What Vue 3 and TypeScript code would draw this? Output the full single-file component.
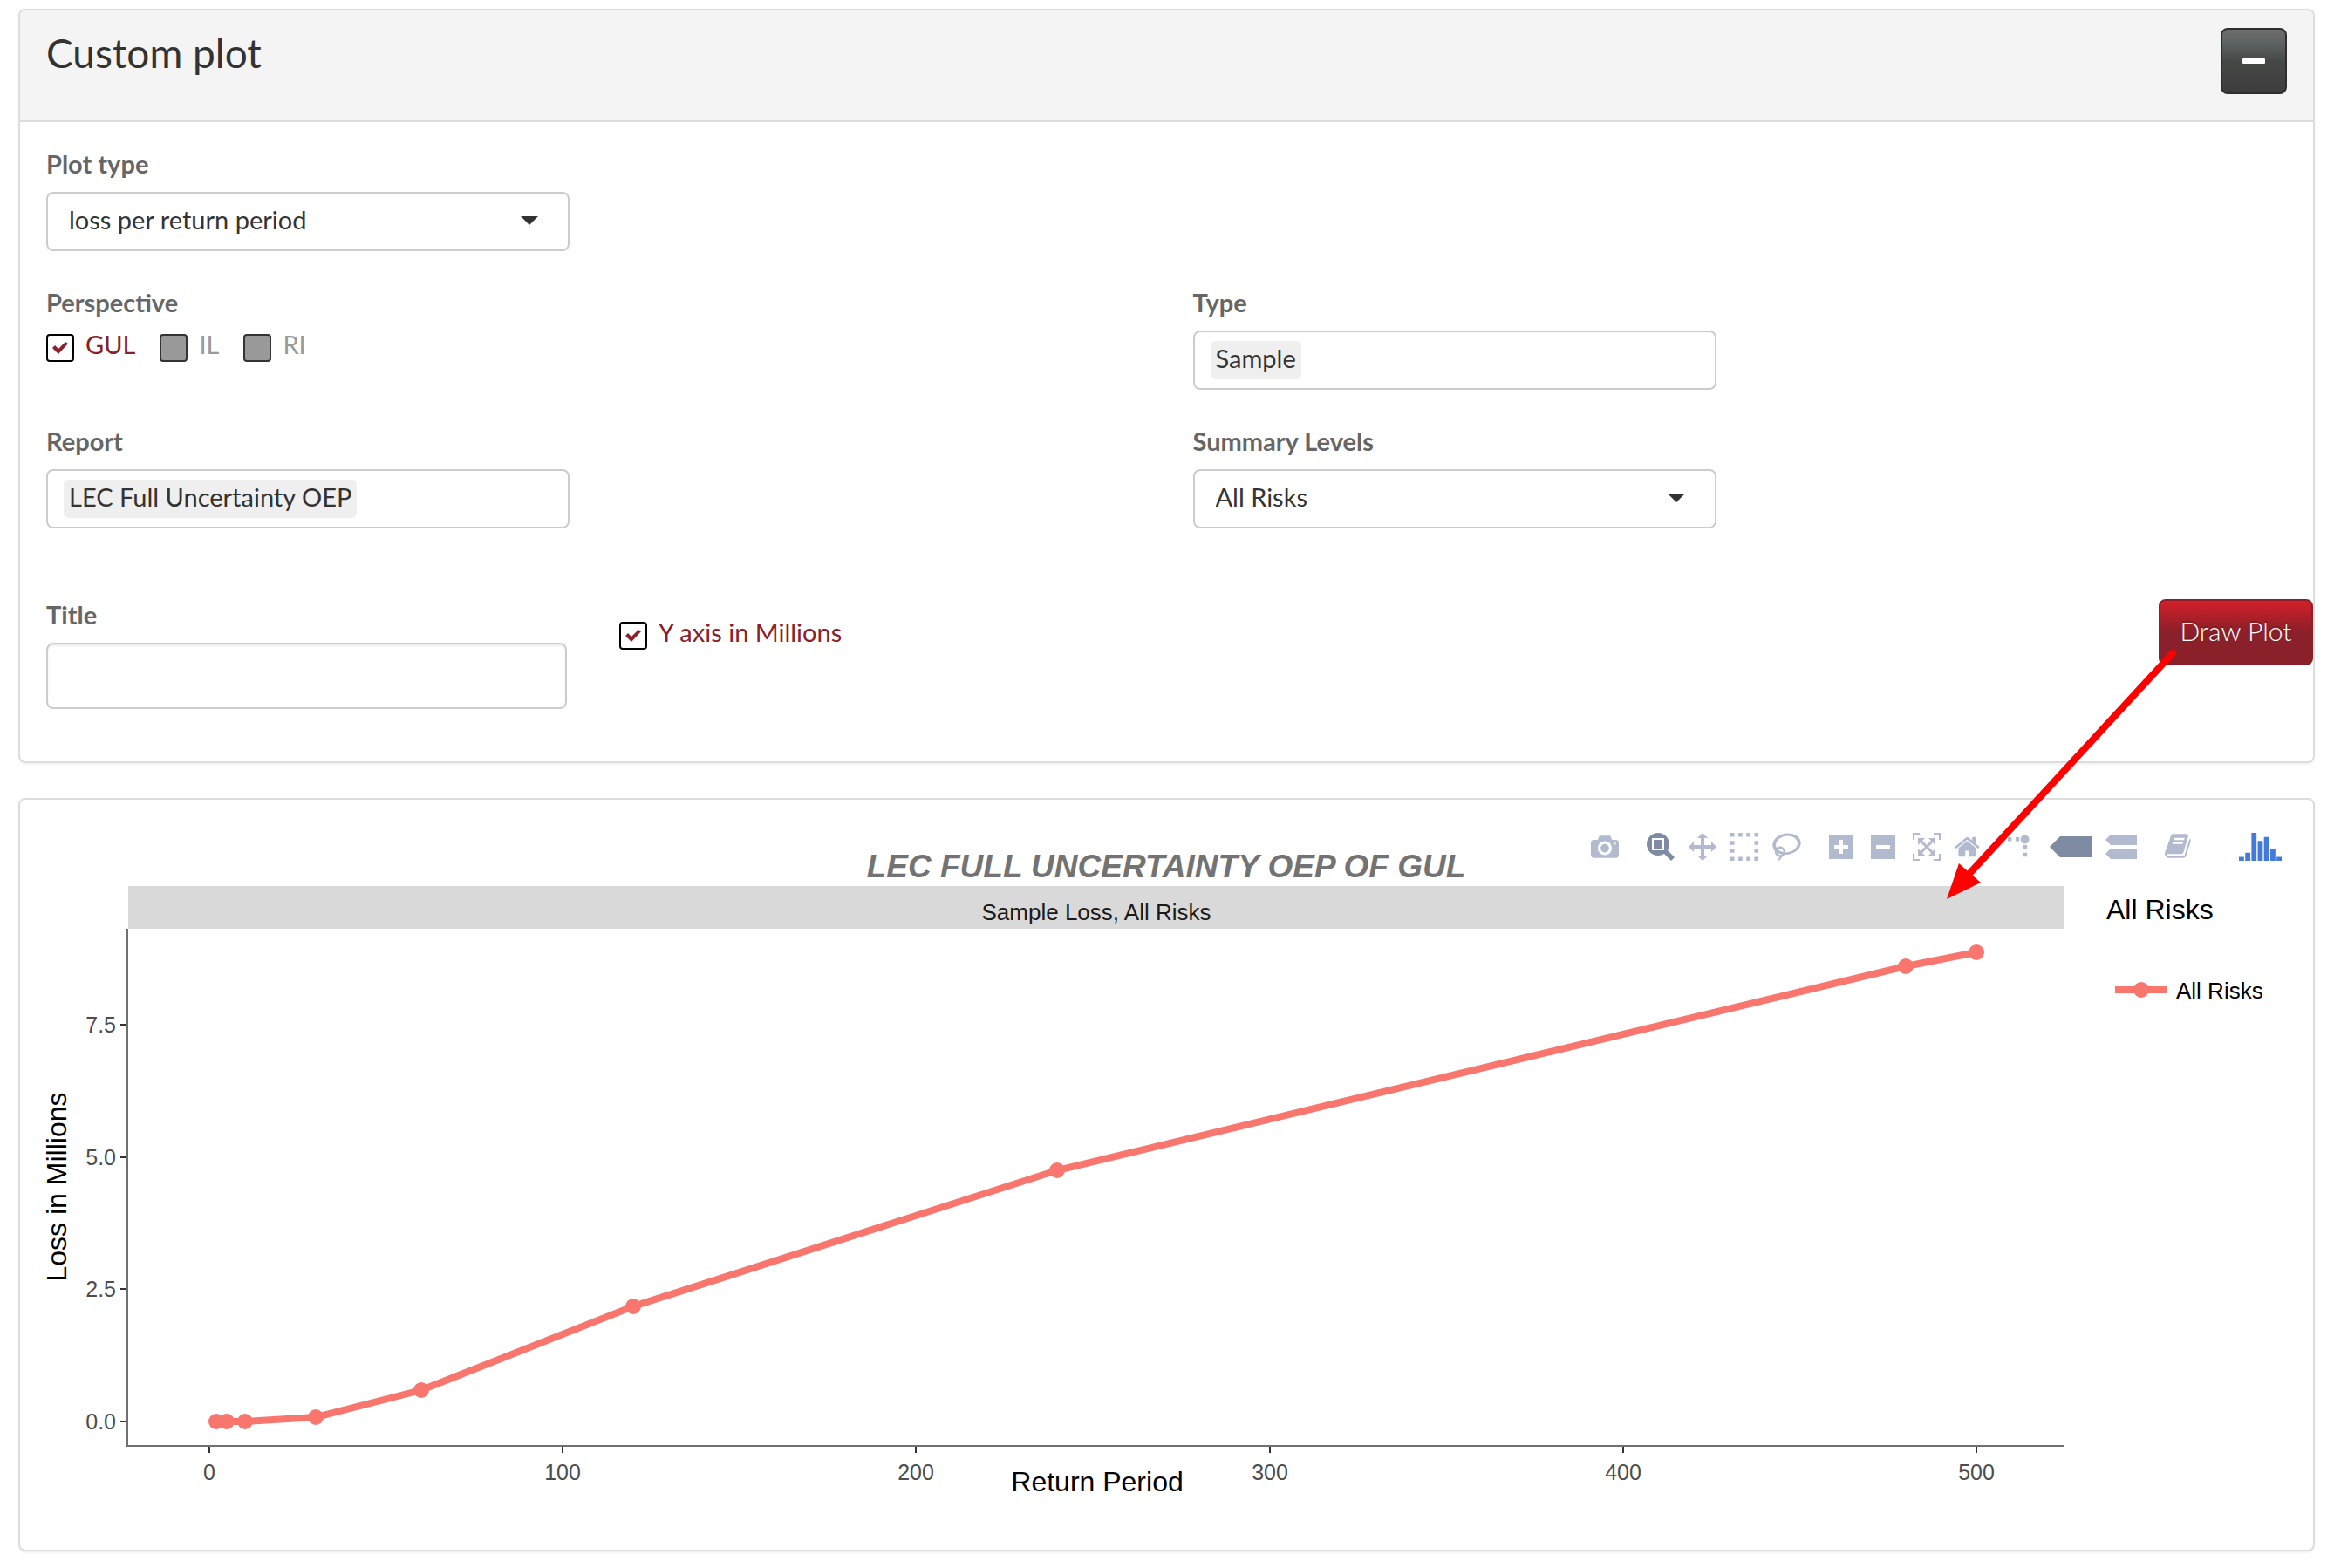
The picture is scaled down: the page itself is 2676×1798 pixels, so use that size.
<script setup lang="ts">
import { ref } from 'vue'

interface Point { period: number; loss: number }
interface Icon { name: string; path: string; width: number; units: number; transform: string; active?: boolean }

const plotType = ref('loss per return period')
const summaryLevel = ref('All Risks')
const title = ref('')
const inMillions = ref(true)
const perspectives = ref([
  { name: 'GUL', checked: true, disabled: false },
  { name: 'IL', checked: false, disabled: true },
  { name: 'RI', checked: false, disabled: true },
])

const points: Point[] = [
  { period: 2, loss: 0 },
  { period: 5, loss: 0 },
  { period: 10, loss: 0 },
  { period: 30, loss: 0.09 },
  { period: 60, loss: 0.59 },
  { period: 120, loss: 2.17 },
  { period: 240, loss: 4.75 },
  { period: 480, loss: 8.6 },
  { period: 500, loss: 8.87 },
]
const xTicks = [0, 100, 200, 300, 400, 500]
const yTicks = [0, 2.5, 5, 7.5]
const sx = (v: number) => Math.round(217 + v * 4.052)
const sy = (v: number) => Math.round(713 - v * 60.67)
const linePoints = points.map((p) => `${sx(p.period)},${sy(p.loss)}`).join(' ')

const checkPath = 'M1 8L4 5L8 9L16 1L19 3L8 15z'
const flip = 'matrix(1 0 0 -1 0 850)'
const groups: Icon[][] = [
  [
    { name: 'Download plot as a png', width: 32, units: 1000, transform: flip, path: 'm500 450c-83 0-150-67-150-150 0-83 67-150 150-150 83 0 150 67 150 150 0 83-67 150-150 150z m400 150h-120c-16 0-34 13-39 29l-31 93c-6 15-23 28-40 28h-340c-16 0-34-13-39-28l-31-94c-6-15-23-28-40-28h-120c-55 0-100-45-100-100v-450c0-55 45-100 100-100h800c55 0 100 45 100 100v450c0 55-45 100-100 100z m-400-550c-138 0-250 112-250 250 0 138 112 250 250 250 138 0 250-112 250-250 0-138-112-250-250-250z m365 380c-19 0-35 16-35 35 0 19 16 35 35 35 19 0 35-16 35-35 0-19-16-35-35-35z' },
  ],
  [
    { name: 'Zoom', active: true, width: 32, units: 1000, transform: flip, path: 'm1000-25l-250 251c40 63 63 138 63 218 0 224-182 406-407 406-224 0-406-182-406-406s183-406 407-406c80 0 155 22 218 62l250-250 125 125z m-812 250l0 438 437 0 0-438-437 0z m62 375l313 0 0-312-313 0 0 312z' },
    { name: 'Pan', width: 32, units: 1000, transform: flip, path: 'm1000 350l-187 188 0-125-250 0 0 250 125 0-188 187-187-187 125 0 0-250-250 0 0 125-188-188 186-187 0 125 252 0 0-250-125 0 187-188 188 188-125 0 0 250 250 0 0-126 187 188z' },
    { name: 'Box select', width: 32, units: 1000, transform: flip, path: 'm0 850l0-143 143 0 0 143-143 0z m286 0l0-143 143 0 0 143-143 0z m285 0l0-143 143 0 0 143-143 0z m286 0l0-143 143 0 0 143-143 0z m-857-286l0-143 143 0 0 143-143 0z m857 0l0-143 143 0 0 143-143 0z m-857-285l0-143 143 0 0 143-143 0z m857 0l0-143 143 0 0 143-143 0z m-857-286l0-143 143 0 0 143-143 0z m286 0l0-143 143 0 0 143-143 0z m285 0l0-143 143 0 0 143-143 0z m286 0l0-143 143 0 0 143-143 0z' },
    { name: 'Lasso select', width: 33, units: 1031, transform: flip, path: 'm1018 538c-36 207-290 336-568 286-277-48-473-256-436-463 10-57 36-108 76-151-13-66 11-137 68-183 34-28 75-41 114-42l-55-70 0 0c-2-1-3-2-4-3-10-14-8-34 5-45 14-11 34-8 45 4 1 1 2 3 2 5l0 0 113 140c16 11 31 24 45 40 4 3 6 7 8 11 48-3 100 0 151 9 278 48 473 255 436 462z m-624-379c-80 14-149 48-197 96 42 42 109 47 156 9 33-26 47-66 41-105z m-187-74c-19 16-33 37-39 60 50-32 109-55 174-68-42-25-95-24-135 8z m360 75c-34-7-69-9-102-8 8 62-16 128-68 170-73 59-175 54-244-5-9 20-16 40-20 61-28 159 121 317 333 354s407-60 434-217c28-159-121-318-333-355z' },
  ],
  [
    { name: 'Zoom in', width: 32, units: 1000, transform: flip, path: 'm1 787l0-875 875 0 0 875-875 0z m687-500l-187 0 0-187-125 0 0 187-188 0 0 125 188 0 0 187 125 0 0-187 187 0 0-125z' },
    { name: 'Zoom out', width: 32, units: 1000, transform: flip, path: 'm0 788l0-876 876 0 0 876-876 0z m688-500l-500 0 0 125 500 0 0-125z' },
    { name: 'Autoscale', width: 32, units: 1000, transform: flip, path: 'm250 850l-187 0-63 0 0-62 0-188 63 0 0 188 187 0 0 62z m688 0l-188 0 0-62 188 0 0-188 62 0 0 188 0 62-62 0z m-875-938l0 188-63 0 0-188 0-62 63 0 187 0 0 62-187 0z m875 188l0-188-188 0 0-62 188 0 62 0 0 62 0 188-62 0z m-125 188l-1 0-93-94-156 156 156 156 92-93 2 0 0 250-250 0 0-2 93-92-156-156-156 156 94 92 0 2-250 0 0-250 0 0 93 93 157-156-157-156-93 94 0 0 0-250 250 0 0 0-94 93 156 157 156-157-93-93 0 0 250 0 0 250z' },
    { name: 'Reset axes', width: 29, units: 929, transform: flip, path: 'm786 296v-267q0-15-11-26t-25-10h-214v214h-143v-214h-214q-15 0-25 10t-11 26v267q0 1 0 2t0 2l321 264 321-264q1-1 1-4z m124 39l-34-41q-5-5-12-6h-2q-7 0-12 3l-386 322-386-322q-7-4-13-4-7 2-12 7l-35 41q-4 5-3 13t6 12l401 334q18 15 42 15t43-15l136-114v109q0 8 5 13t13 5h107q8 0 13-5t5-13v-227l122-102q5-5 6-12t-4-13z' },
  ],
  [
    { name: 'Toggle spike lines', width: 32, units: 1000, transform: 'matrix(1.5 0 0 -1.5 0 850)', path: 'M512 409c0-57-46-104-103-104-57 0-104 47-104 104 0 57 47 103 104 103 57 0 103-46 103-103z m-327-39l92 0 0 92-92 0z m-185 0l92 0 0 92-92 0z m370-186l92 0 0 93-92 0z m0-184l92 0 0 92-92 0z' },
    { name: 'Show closest data on hover', active: true, width: 48, units: 1500, transform: flip, path: 'm375 725l0 0-375-375 375-374 0-1 1125 0 0 750-1125 0z' },
    { name: 'Compare data on hover', width: 36, units: 1125, transform: flip, path: 'm187 786l0 2-187-188 188-187 0 0 937 0 0 373-938 0z m0-499l0 1-187-188 188-188 0 0 937 0 0 376-938-1z' },
  ],
]
const bookPath = 'M1639 478q40 57 18 129l-275 906q-19 64-76.5 107.5t-122.5 43.5h-923q-77 0-148.5-53.5t-99.5-131.5q-24-67-2-127 0-4 3-27t4-37q1-8-3-21.5t-3-19.5q2-11 8-21t16.5-23.5 16.5-23.5q23-38 45-91.5t30-91.5q3-10 .5-30t-.5-28q3-11 17-28t17-23q21-36 42-92t25-90q1-9-2.5-32t.5-28q4-13 22-30.5t22-22.5q19-26 42.5-84.5t27.5-96.5q1-8-3-25.5t-2-26.5q2-8 9-18t18-23 17-21q8-12 16.5-30.5t15-35 16-36 19.5-32 26.5-23.5 36-11.5 47.5 5.5l-1 3q38-9 51-9h761q74 0 114 56t18 130l-274 906q-36 119-71.5 153.5t-128.5 34.5h-869q-27 0-38 15-11 16-1 43 24 70 144 70h923q29 0 56-15.5t35-41.5l300-987q7-22 5-57 38 15 59 43zm-1064 2q-4 13 2 22.5t20 9.5h608q13 0 25.5-9.5t16.5-22.5l21-64q4-13-2-22.5t-20-9.5h-608q-13 0-25.5 9.5t-16.5 22.5zm-83 256q-4 13 2 22.5t20 9.5h608q13 0 25.5-9.5t16.5-22.5l21-64q4-13-2-22.5t-20-9.5h-608q-13 0-25.5 9.5t-16.5 22.5z'
const logoPath = 'm0-10h182v-140h-182v140z m228 146h183v-286h-183v286z m225 714h182v-1000h-182v1000z m225-285h182v-715h-182v715z m225 142h183v-857h-183v857z m231-428h182v-429h-182v429z m225-291h183v-138h-183v138z'
</script>

<template>
  <main class="page">
    <section class="panel">
      <header class="panel-head">
        <h1>Custom plot</h1>
        <button class="btn btn-dark" type="button" aria-label="Collapse">
          <svg width="26" height="6" viewBox="0 0 26 6"><rect width="26" height="6" rx="1" fill="#fff" /></svg>
        </button>
      </header>

      <form class="panel-body" @submit.prevent>
        <div class="grid">
          <div class="field wide">
            <label class="caption" for="plot-type">Plot type</label>
            <div class="select-box">
              <select id="plot-type" v-model="plotType"><option>loss per return period</option></select>
              <svg class="caret" width="20" height="10" viewBox="0 0 20 10"><path d="M0 0h20L10 10z" /></svg>
            </div>
          </div>

          <div class="field" role="group" aria-labelledby="perspective">
            <span id="perspective" class="caption">Perspective</span>
            <div class="checks">
              <label v-for="p in perspectives" :key="p.name" class="check" :class="{ off: p.disabled }">
                <span class="tick">
                  <input v-model="p.checked" type="checkbox" :disabled="p.disabled" />
                  <svg v-if="p.checked" width="20" height="16" viewBox="0 0 20 16"><path :d="checkPath" /></svg>
                </span>
                {{ p.name }}
              </label>
            </div>
          </div>
          <div class="field">
            <label class="caption" for="loss-type">Type</label>
            <div class="tag-box"><span class="tag">Sample</span><input id="loss-type" type="text" /></div>
          </div>

          <div class="field">
            <label class="caption" for="report">Report</label>
            <div class="tag-box"><span class="tag">LEC Full Uncertainty OEP</span><input id="report" type="text" /></div>
          </div>
          <div class="field">
            <label class="caption" for="summary">Summary Levels</label>
            <div class="select-box">
              <select id="summary" v-model="summaryLevel"><option>All Risks</option></select>
              <svg class="caret" width="20" height="10" viewBox="0 0 20 10"><path d="M0 0h20L10 10z" /></svg>
            </div>
          </div>
        </div>

        <div class="actions">
          <div class="field title-field">
            <label class="caption" for="title">Title</label>
            <input id="title" v-model="title" class="text-input" type="text" />
          </div>
          <label class="check millions">
            <span class="tick">
              <input v-model="inMillions" type="checkbox" />
              <svg v-if="inMillions" width="20" height="16" viewBox="0 0 20 16"><path :d="checkPath" /></svg>
            </span>
            Y axis in Millions
          </label>
          <button class="btn btn-red" type="submit">Draw Plot</button>
        </div>
      </form>
    </section>

    <section class="panel plot">
      <svg class="chart" viewBox="0 0 2629 860" role="img" aria-label="Loss per return period">
        <text class="chart-title" x="1314" y="89">LEC FULL UNCERTAINTY OEP OF GUL</text>
        <rect class="strip" x="124" y="99" width="2220" height="49" />
        <text class="strip-text" x="1234" y="138">Sample Loss, All Risks</text>

        <path class="axis" d="M123 148V741H2344" />
        <g v-for="t in yTicks" :key="'y' + t">
          <path class="mark" :d="`M115 ${sy(t)}h7`" />
          <text class="tick-text end" x="110" :y="sy(t) + 9">{{ t.toFixed(1) }}</text>
        </g>
        <g v-for="t in xTicks" :key="'x' + t">
          <path class="mark" :d="`M${sx(t)} 742v7`" />
          <text class="tick-text" :x="sx(t)" y="780">{{ t }}</text>
        </g>
        <text class="axis-title" x="1235" y="793">Return Period</text>
        <text class="axis-title" transform="translate(53 444) rotate(-90)">Loss in Millions</text>

        <polyline class="series" :points="linePoints" />
        <circle v-for="p in points" :key="p.period" class="dot" :cx="sx(p.period)" :cy="sy(p.loss)" r="9" />

        <text class="legend-title" x="2392" y="137">All Risks</text>
        <path class="series" d="M2402 218h60" />
        <circle class="dot" cx="2432" cy="218" r="9" />
        <text class="legend-text" x="2472" y="228">All Risks</text>
      </svg>

      <div class="modebar">
        <div v-for="(g, i) in groups" :key="i" class="mode-group">
          <button v-for="ic in g" :key="ic.name" type="button" class="mode" :class="{ active: ic.active }" :title="ic.name" :aria-label="ic.name">
            <svg :width="ic.width" height="32" :viewBox="`0 0 ${ic.units} 1000`"><path :d="ic.path" :transform="ic.transform" /></svg>
          </button>
        </div>
        <button type="button" class="mode" aria-label="Documentation">
          <svg width="30" height="32" viewBox="0 56 1680 1792"><path :d="bookPath" /></svg>
        </button>
        <a class="logo" href="#" aria-label="Plotly">
          <svg width="49" height="32" viewBox="0 0 1542 1000"><path :d="logoPath" transform="matrix(1 0 0 -1 0 850)" /></svg>
        </a>
      </div>
    </section>

    <svg class="pointer" width="276" height="300" viewBox="0 0 276 300" aria-hidden="true">
      <path d="M265 12L30 267" stroke="#f00" stroke-width="8" stroke-linecap="round" />
      <path d="M6 294L20 253L45 275z" fill="#f00" />
    </svg>
  </main>
</template>

<style>
body {
  margin: 0;
  background: #fff;
}
</style>

<style scoped>
.page {
  position: relative;
  display: flex;
  flex-direction: column;
  gap: 40px;
  padding: 10px 22px 19px 21px;
  font-family: Lato, sans-serif;
  font-size: 29px;
  line-height: 40px;
  color: #333;
}
.panel {
  position: relative;
  background: #fff;
  border: 2px solid #ddd;
  border-radius: 8px;
  box-shadow: 0 2px 2px rgba(0, 0, 0, 0.05);
}
.panel-head {
  display: flex;
  justify-content: space-between;
  align-items: flex-start;
  padding: 20px 30px 30px;
  border-bottom: 2px solid #ddd;
  border-radius: 6px 6px 0 0;
  background: #f4f4f4;
}
h1 {
  margin: 0;
  font-size: 46px;
  font-weight: 400;
  line-height: 58px;
}
.btn {
  box-sizing: border-box;
  height: 76px;
  display: flex;
  align-items: center;
  justify-content: center;
  border-radius: 8px;
  color: #fff;
  font: inherit;
  text-shadow: 0 -2px 0 rgba(0, 0, 0, 0.2);
}
.btn-dark {
  width: 76px;
  padding: 0;
  border: 2px solid #2d2e2d;
  background: linear-gradient(#6e6e6e, #5a5f60 25%, #464846 50%, #3c3d3c);
}
.btn-red {
  margin: 2px 0 0 auto;
  width: 177px;
  padding: 0 0 4px;
  border: 2px solid #8a2029;
  background: linear-gradient(#d21f2a, #8a2029 50%);
  font-size: 30px;
  font-weight: 300;
}
.panel-body {
  padding: 28px 0 60px 30px;
}
.grid {
  display: grid;
  grid-template-columns: calc(50% + 15px) 1fr;
  row-gap: 39px;
}
.wide {
  grid-column: 1 / -1;
}
.field {
  display: flex;
  flex-direction: column;
  gap: 12px;
}
.caption {
  color: #666;
  font-weight: 700;
}
.select-box,
.tag-box {
  position: relative;
  box-sizing: border-box;
  width: 600px;
  height: 68px;
  border: 2px solid #ccc;
  border-radius: 8px;
  background: #fff;
}
select {
  appearance: none;
  width: 100%;
  height: 100%;
  padding: 0 24px 4px;
  border: 0;
  background: none;
  color: inherit;
  font: inherit;
}
.caret {
  position: absolute;
  right: 34px;
  top: 26px;
  fill: #333;
  pointer-events: none;
}
.tag-box {
  display: flex;
  align-items: center;
  gap: 6px;
  padding: 0 18px;
}
.tag {
  padding: 0 6px 4px;
  border-radius: 6px;
  background: #efefef;
  white-space: nowrap;
}
.tag-box input {
  flex: 1;
  min-width: 0;
  border: 0;
  background: none;
  font: inherit;
  outline: 0;
}
.checks {
  display: flex;
  gap: 28px;
}
.check {
  display: flex;
  align-items: flex-start;
  gap: 13px;
  margin-top: -4px;
  color: #8a2029;
}
.check.off {
  color: #999;
}
.tick {
  position: relative;
  display: flex;
  margin-top: 8px;
}
.tick input {
  appearance: none;
  box-sizing: border-box;
  width: 32px;
  height: 32px;
  margin: 0;
  border: 2px solid #000;
  border-radius: 4px;
  background: #fff;
}
.tick input:disabled {
  border-color: #333;
  background: #999;
}
.tick svg {
  position: absolute;
  left: 6px;
  top: 8px;
  fill: #8a2029;
  pointer-events: none;
}
.actions {
  display: flex;
  align-items: flex-start;
  margin-top: 79px;
}
.title-field {
  width: 597px;
}
.text-input {
  box-sizing: border-box;
  width: 100%;
  height: 76px;
  padding: 0 24px;
  border: 2px solid #ccc;
  border-radius: 8px;
  box-shadow: inset 0 2px 2px rgba(0, 0, 0, 0.075);
  font: inherit;
}
.millions {
  margin: 20px 0 0 60px;
}
.plot {
  font-family: "Liberation Sans", Arial, sans-serif;
}
.chart {
  display: block;
  width: 100%;
  height: auto;
}
.chart text {
  text-anchor: middle;
}
.chart-title {
  font-size: 37px;
  font-weight: 700;
  font-style: italic;
  fill: #737373;
}
.strip {
  fill: #d9d9d9;
}
.strip-text {
  font-size: 26px;
  fill: #1a1a1a;
}
.axis {
  fill: none;
  stroke: #6f706f;
  stroke-width: 2px;
}
.mark {
  stroke: #333;
  stroke-width: 2px;
}
.tick-text {
  font-size: 25px;
  fill: #4d4d4d;
}
.chart .end {
  text-anchor: end;
}
.axis-title,
.legend-title {
  font-size: 32px;
  fill: #000;
}
.chart .legend-title,
.chart .legend-text {
  text-anchor: start;
}
.legend-text {
  font-size: 26px;
  fill: #000;
}
.series {
  fill: none;
  stroke: #f8766d;
  stroke-width: 8px;
}
.dot {
  fill: #f8766d;
}
.modebar {
  position: absolute;
  top: 38px;
  right: 36px;
  display: flex;
  gap: 32px;
}
.mode-group {
  display: flex;
  gap: 16px;
}
.mode {
  display: flex;
  padding: 0;
  border: 0;
  background: none;
  fill: #b2bad0;
}
.mode.active {
  fill: #7f8aa3;
}
.logo {
  display: flex;
  margin-left: 23px;
  fill: #447adb;
}
.pointer {
  position: absolute;
  top: 737px;
  right: 174px;
  fill: none;
  pointer-events: none;
}
</style>
